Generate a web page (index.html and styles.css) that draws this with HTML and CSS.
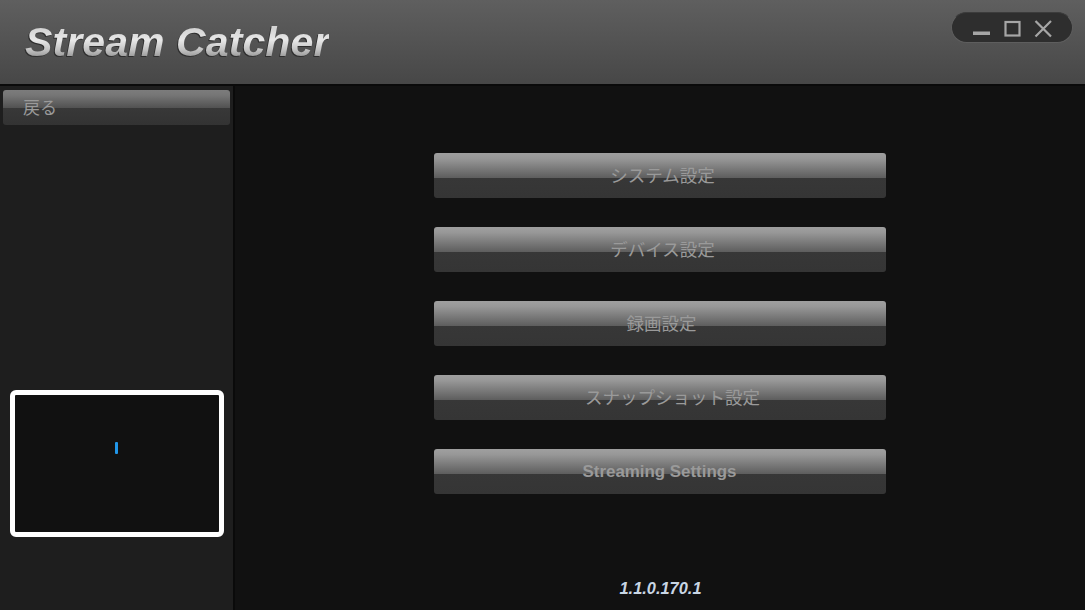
FILE: index.html
```html
<!DOCTYPE html>
<html lang="ja">
<head>
<meta charset="utf-8">
<title>Stream Catcher</title>
<link rel="stylesheet" href="styles.css">
</head>
<body>
<div class="app">
  <header class="titlebar">
    <h1 class="logo">Stream Catcher</h1>
    <div class="winctl">
      <svg class="ctl-icons" width="120" height="29" viewBox="0 0 120 29">
        <rect x="21" y="18.5" width="17" height="3.5" fill="#a6a6a6"/>
        <rect x="53.5" y="9" width="14" height="13.5" fill="none" stroke="#a6a6a6" stroke-width="2.2"/>
        <path d="M83.5 8 L99 23.5 M99 8 L83.5 23.5" stroke="#a6a6a6" stroke-width="2.2" fill="none"/>
      </svg>
    </div>
  </header>
  <div class="body">
    <aside class="sidebar">
      <button class="btn back">戻る</button>
      <div class="preview"><span class="cursor"></span></div>
    </aside>
    <main class="main">
      <div class="menu">
        <button class="btn wide jp nudge-a">システム設定</button>
        <button class="btn wide jp nudge-a">デバイス設定</button>
        <button class="btn wide jp nudge-b">録画設定</button>
        <button class="btn wide jp nudge-c">スナップショット設定</button>
        <button class="btn wide latin">Streaming Settings</button>
      </div>
      <div class="version">1.1.0.170.1</div>
    </main>
  </div>
</div>
</body>
</html>
```

FILE: styles.css
```css
* { box-sizing: border-box; }
html, body { margin: 0; padding: 0; height: 100%; background: #111; overflow: hidden; }
.app { width: 1085px; height: 610px; display: flex; flex-direction: column; font-family: "Liberation Sans", "Noto Sans CJK JP", sans-serif; }
.titlebar { height: 86px; flex: none; background: linear-gradient(#5f5f5f, #474747); border-bottom: 2px solid #0a0a0a; display: flex; justify-content: space-between; align-items: flex-start; padding: 12px 12px 0 25px; }
.logo { margin: 7px 0 0; font-size: 41px; line-height: 47px; font-weight: 700; font-style: italic; letter-spacing: 0.1px; background: linear-gradient(#d4d4d4 22%, #e8e8e8 45%, #c4c4c4 65%, #8e8e8e 85%); -webkit-background-clip: text; background-clip: text; color: transparent; filter: drop-shadow(-1px 1px 0 #2e2e2e); }
.winctl { width: 122px; height: 31px; border-radius: 16px; background: #2e2e2e; border: 1px solid #5e5e5e; border-top-color: #3c3c3c; }
.ctl-icons { display: block; }
.body { flex: 1; display: flex; min-height: 0; }
.sidebar { width: 235px; flex: none; background: #1e1e1e; border-right: 2px solid #0a0a0a; padding: 4px 0 0 3px; display: flex; flex-direction: column; }
.btn { display: block; border: 0; padding: 0; border-radius: 3px; background: linear-gradient(#9f9f9f 0, #989898 12%, #5e5e5e 55%, #373737 55%, #353535 100%); color: #9a9a9a; font-family: "Liberation Sans", "Noto Sans CJK JP", sans-serif; font-size: 17.5px; line-height: 43px; text-align: center; }
.back { width: 227px; height: 35px; line-height: 37px; text-align: left; padding-left: 20px; font-size: 17px; background: linear-gradient(#7c7c7c 0, #767676 15%, #515151 52%, #383838 52%, #333 100%); }
.preview { width: 214px; height: 147px; margin: 265px 0 0 6.5px; background: #111; border: 5px solid #fff; border-radius: 6px; display: flex; align-items: flex-start; justify-content: center; padding-top: 47px; }
.cursor { width: 3px; height: 12px; border-radius: 1px; background: #2196e8; margin-right: 1px; }
.main { flex: 1; display: flex; flex-direction: column; align-items: center; background: #111; }
.menu { display: flex; flex-direction: column; gap: 29px; padding-top: 67px; margin-left: -1px; }
.wide { width: 452px; height: 45px; }
.jp { padding-top: 2px; }
.nudge-a { padding-left: 6px; }
.nudge-b { padding-left: 4px; }
.nudge-c { padding-left: 26px; }
.latin { font-weight: 700; font-size: 16.9px; line-height: 45px; }
.version { margin: 84px 0 0 1px; font-size: 16.4px; line-height: 20px; font-weight: 700; font-style: italic; color: #c9d6e4; }
```
